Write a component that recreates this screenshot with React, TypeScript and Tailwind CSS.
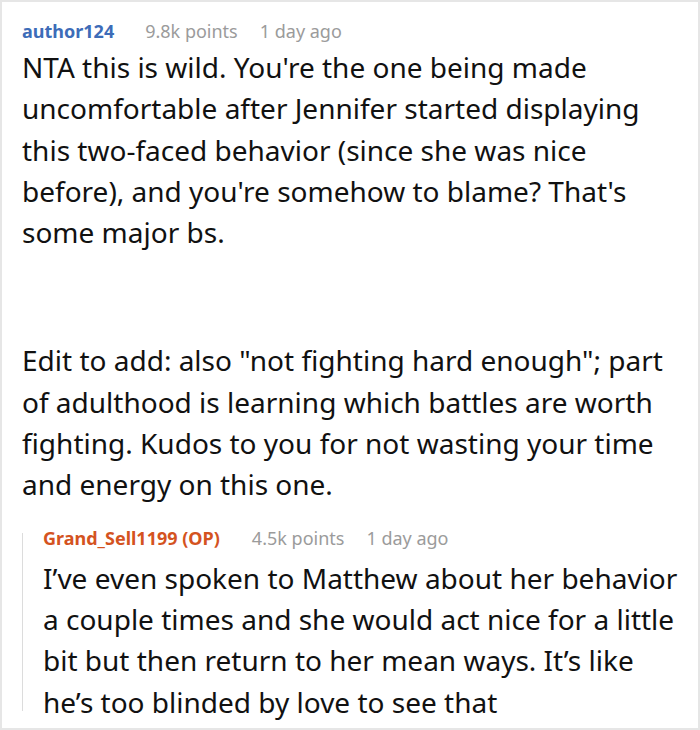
export default function App() {
  const font = { fontFamily: '"Noto Sans", "Open Sans", sans-serif' };
  return (
    <div className="w-[700px] h-[730px] bg-white border-2 border-[#e6e6e6] overflow-hidden" style={font}>
      <div className="pl-[20px] pr-[18px] pt-[16px]">
        <div className="flex items-baseline text-[18px] leading-[27px]">
          <span className="font-bold text-[#3d6cb8]">author124</span>
          <span className="ml-[31px] text-[#9b9b9b]">9.8k points</span>
          <span className="ml-[22px] text-[#9b9b9b]">1 day ago</span>
        </div>
        <div className="mt-[2px] text-[28px] leading-[41.3px] text-[#111]">
          <p>
            NTA this is wild. You're the one being made uncomfortable after Jennifer started displaying this two-faced behavior (since she was nice before), and you're somehow to blame? That's some major bs.
          </p>
          <p className="mt-[87px]">
            Edit to add: also "not fighting hard enough"; part of adulthood is learning which battles are worth fighting. Kudos to you for not wasting your time and energy on this one.
          </p>
        </div>
        <div className="mt-[27px] flex flex-col border-l border-[#dcdcdc] pl-[20px]">
          <div className="-mt-[8px] flex items-baseline text-[18px] leading-[27px]">
            <span className="font-bold text-[#d4531f]">Grand_Sell1199 (OP)</span>
            <span className="ml-[32px] text-[#9b9b9b]">4.5k points</span>
            <span className="ml-[22px] text-[#9b9b9b]">1 day ago</span>
          </div>
          <p className="mt-[6px] -mb-[12px] text-[28px] leading-[41.3px] text-[#111]">
            I’ve even spoken to Matthew about her behavior a couple times and she would act nice for a little bit but then return to her mean ways. It’s like he’s too blinded by love to see that
          </p>
        </div>
      </div>
    </div>
  );
}
